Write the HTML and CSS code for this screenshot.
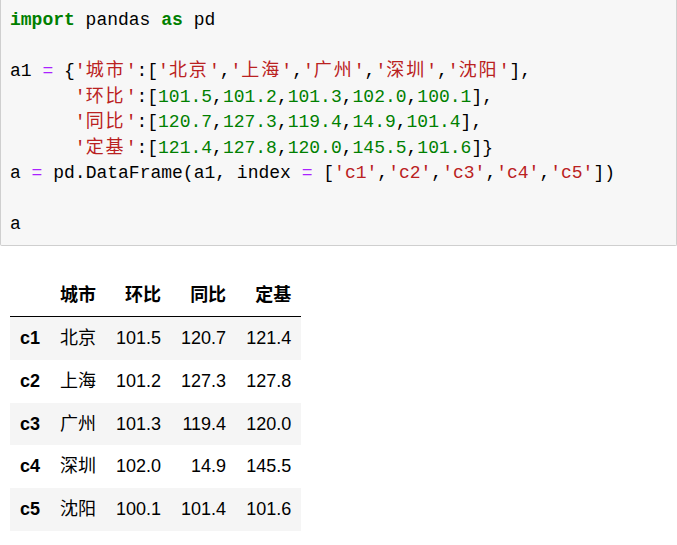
FILE: index.html
```html
<!DOCTYPE html>
<html lang="zh">
<head>
    <meta charset="UTF-8">
    <title>pandas DataFrame</title>
    <link rel="stylesheet" href="styles.css">
</head>
<body>
<div class="cell">
    <pre class="code"><span class="kw">import</span> pandas <span class="kw">as</span> pd

a1 <span class="op">=</span> {<span class="s">'<span class="zh">城市</span>'</span>:[<span class="s">'<span class="zh">北京</span>'</span>,<span class="s">'<span class="zh">上海</span>'</span>,<span class="s">'<span class="zh">广州</span>'</span>,<span class="s">'<span class="zh">深圳</span>'</span>,<span class="s">'<span class="zh">沈阳</span>'</span>],
      <span class="s">'<span class="zh">环比</span>'</span>:[<span class="n">101.5</span>,<span class="n">101.2</span>,<span class="n">101.3</span>,<span class="n">102.0</span>,<span class="n">100.1</span>],
      <span class="s">'<span class="zh">同比</span>'</span>:[<span class="n">120.7</span>,<span class="n">127.3</span>,<span class="n">119.4</span>,<span class="n">14.9</span>,<span class="n">101.4</span>],
      <span class="s">'<span class="zh">定基</span>'</span>:[<span class="n">121.4</span>,<span class="n">127.8</span>,<span class="n">120.0</span>,<span class="n">145.5</span>,<span class="n">101.6</span>]}
a <span class="op">=</span> pd.DataFrame(a1, index <span class="op">=</span> [<span class="s">'c1'</span>,<span class="s">'c2'</span>,<span class="s">'c3'</span>,<span class="s">'c4'</span>,<span class="s">'c5'</span>])

a</pre>
</div>

<div class="output">
    <table class="dataframe">
        <thead>
            <tr><th></th><th>城市</th><th>环比</th><th>同比</th><th>定基</th></tr>
        </thead>
        <tbody>
            <tr><th>c1</th><td>北京</td><td>101.5</td><td>120.7</td><td>121.4</td></tr>
            <tr><th>c2</th><td>上海</td><td>101.2</td><td>127.3</td><td>127.8</td></tr>
            <tr><th>c3</th><td>广州</td><td>101.3</td><td>119.4</td><td>120.0</td></tr>
            <tr><th>c4</th><td>深圳</td><td>102.0</td><td>14.9</td><td>145.5</td></tr>
            <tr><th>c5</th><td>沈阳</td><td>100.1</td><td>101.4</td><td>101.6</td></tr>
        </tbody>
    </table>
</div>
</body>
</html>
```

FILE: styles.css
```css
*{
    margin: 0;
    padding: 0;
}
body{
    background: #fff;
    color: #000;
}
.cell{
    width: 675px;
    background-color: #f7f7f7;
    border: 1px solid #cfcfcf;
    border-top: none;
    border-radius: 0 0 2px 2px;
}
.code{
    padding: 8px 9px 7px 9px;
    font-family: "Liberation Mono", "Noto Sans CJK SC", monospace;
    font-size: 18px;
    line-height: 25.5px;
    color: #000;
    white-space: pre;
}
.code .zh{
    letter-spacing: 2px;
}
.code .kw{
    color: #008000;
    font-weight: bold;
}
.code .op{
    color: #aa22ff;
}
.code .s{
    color: #ba2121;
}
.code .n{
    color: #008000;
}
.output{
    padding: 28px 0 0 10px;
}
.dataframe{
    border-collapse: collapse;
    font-family: "Liberation Sans", "Noto Sans CJK SC", sans-serif;
    font-size: 18px;
    color: #000;
}
.dataframe th,
.dataframe td{
    padding: 12px 10px;
    line-height: 18.7px;
    text-align: right;
    white-space: nowrap;
}
.dataframe th{
    font-weight: bold;
}
.dataframe tbody th{
    text-align: left;
}
.dataframe tbody td:first-of-type{
    text-align: left;
}
.dataframe thead tr{
    border-bottom: 1px solid #000;
}
.dataframe tbody tr:nth-child(odd){
    background-color: #f5f5f5;
}
```
